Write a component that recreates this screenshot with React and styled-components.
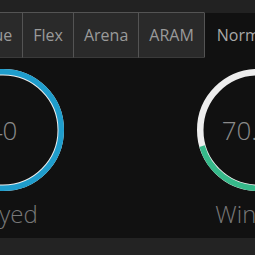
import React from "react";
import styled, { createGlobalStyle } from "styled-components";

const GlobalStyle = createGlobalStyle`
  html, body { margin: 0; padding: 0; background: #111111; overflow: hidden; }
  body { font-family: "Open Sans", "Noto Sans", sans-serif; }
`;

const Page = styled.div`
  width: 255px;
  height: 255px;
  overflow: hidden;
  display: flex;
  flex-direction: column;
  background: #111111;
`;

const TabBar = styled.div`
  display: flex;
  flex-shrink: 0;
  background: #222222;
  padding-top: 12px;
  margin-left: -85px;
  white-space: nowrap;
`;

const Tab = styled.div`
  flex-shrink: 0;
  height: 44px;
  padding: 0 ${(p) => (p.$active ? "12px" : "10px")};
  display: flex;
  align-items: center;
  font-size: 16px;
  color: ${(p) => (p.$active ? "#a8a8a8" : "#9a9a9a")};
  background: ${(p) => (p.$active ? "#111111" : "#2a2a2a")};
  border-top: 1px solid ${(p) => (p.$active ? "#222222" : "#545454")};
  border-left: 1px solid #545454;
  border-bottom: 1px solid ${(p) => (p.$active ? "#111111" : "#3a3a3a")};
`;

const Stats = styled.div`
  flex: 1;
  display: flex;
  margin-left: -125px;
  padding-top: 11px;
`;

const Stat = styled.div`
  width: 255px;
  flex-shrink: 0;
  display: flex;
  flex-direction: column;
  align-items: center;
`;

const Gauge = styled.div`
  display: grid;
  width: 122px;
  height: 122px;
  & > * { grid-area: 1 / 1; }
`;

const Value = styled.div`
  align-self: center;
  justify-self: center;
  font-size: 26px;
  font-weight: 300;
  color: #8a8a8a;
  line-height: 1;
  white-space: nowrap;
`;

const Label = styled.div`
  margin-top: 6px;
  font-size: 24px;
  font-weight: 300;
  color: #787878;
  white-space: nowrap;
`;

const Footer = styled.div`
  height: 17px;
  flex-shrink: 0;
  background: #232323;
`;

function Ring({ pct, color }) {
  const r = 58.25;
  const c = 2 * Math.PI * r;
  return (
    <svg width="122" height="122" viewBox="0 0 122 122">
      <circle cx="61" cy="61" r="57.75" fill="none" stroke="#eeeeee" strokeWidth="6.5" />
      <circle
        cx="61"
        cy="61"
        r={r}
        fill="none"
        stroke={color}
        strokeWidth="5.5"
        strokeDasharray={`${(c * pct) / 100} ${c}`}
        transform="rotate(-90 61 61)"
      />
    </svg>
  );
}

const tabs = ["Solo Queue", "Flex", "Arena", "ARAM", "Normal"];

export default function App() {
  return (
    <>
      <GlobalStyle />
      <Page>
        <TabBar>
          {tabs.map((t) => (
            <Tab key={t} $active={t === "Normal"}>{t}</Tab>
          ))}
        </TabBar>
        <Stats>
          <Stat>
            <Gauge>
              <Ring pct={100} color="#1f9dcc" />
              <Value>40</Value>
            </Gauge>
            <Label>Played</Label>
          </Stat>
          <Stat>
            <Gauge>
              <Ring pct={70.4} color="#36b98a" />
              <Value>70.4%</Value>
            </Gauge>
            <Label>Winrate</Label>
          </Stat>
        </Stats>
        <Footer />
      </Page>
    </>
  );
}
